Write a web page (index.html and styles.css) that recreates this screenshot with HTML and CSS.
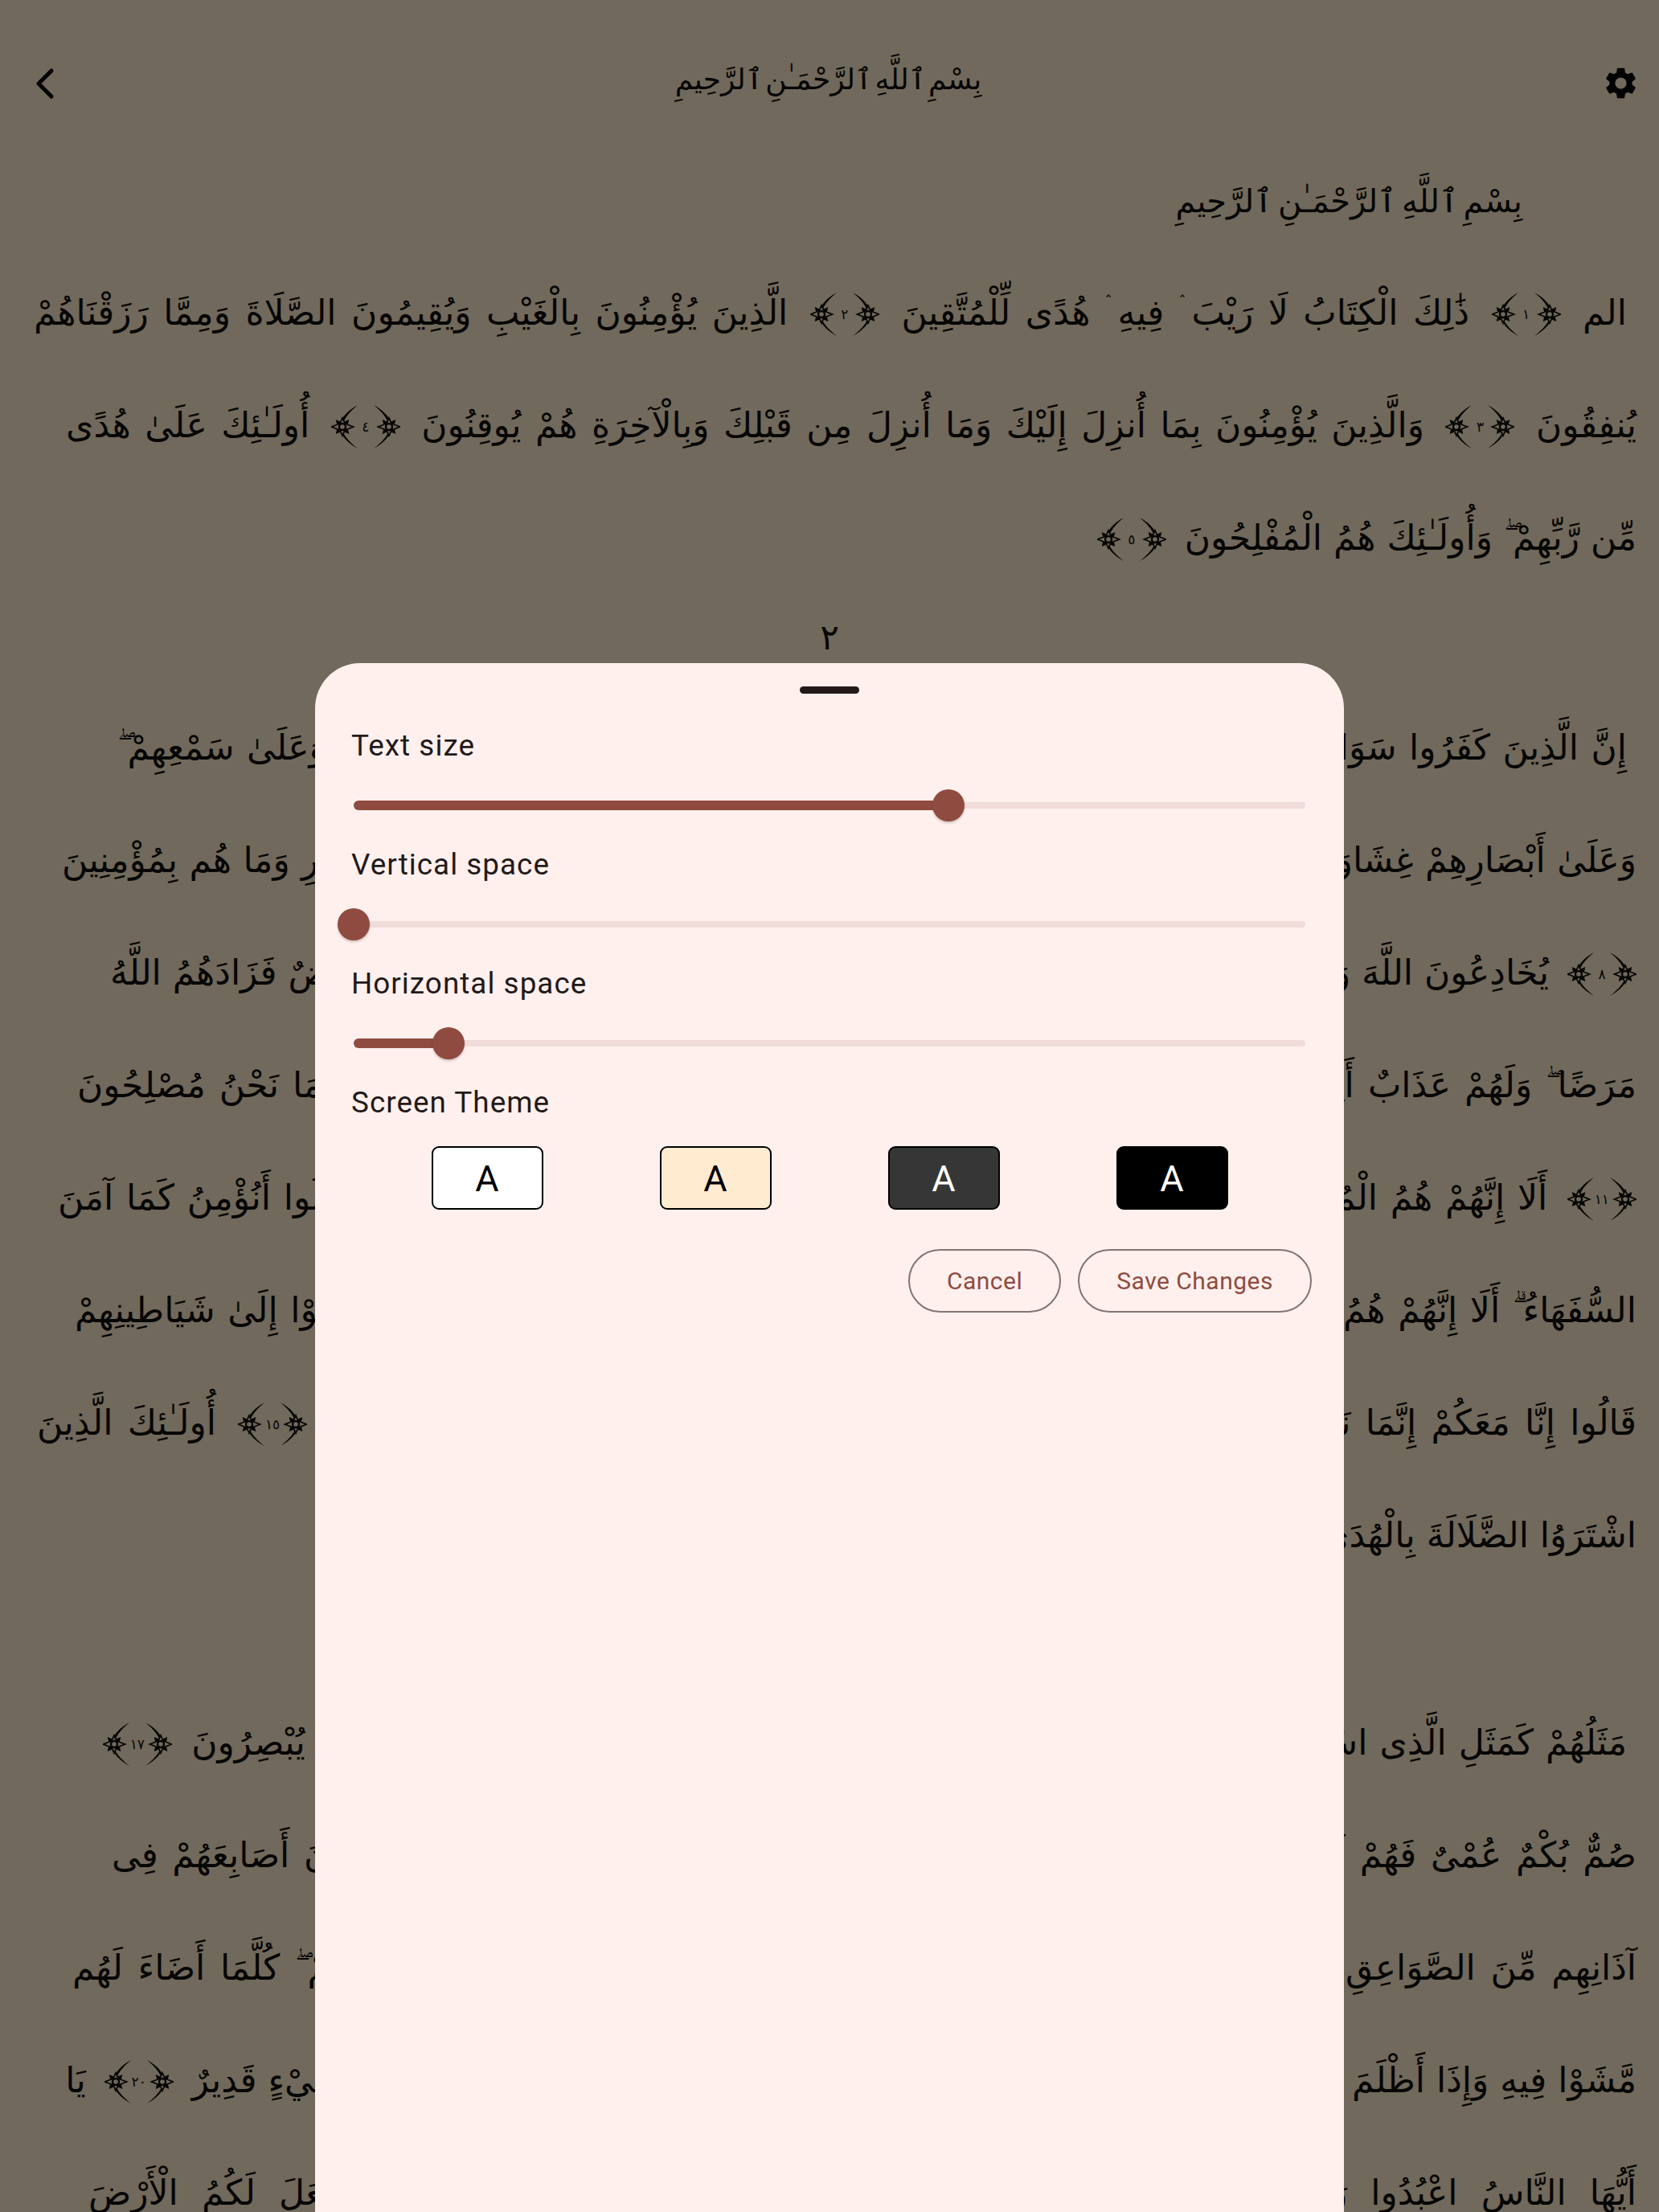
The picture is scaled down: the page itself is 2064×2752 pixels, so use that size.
FILE: index.html
```html
<!DOCTYPE html>
<html lang="ar">
<head>
    <meta charset="UTF-8">
    <meta name="viewport" content="width=device-width, initial-scale=1.0">
    <title>Reader settings</title>
    <link rel="stylesheet" href="styles.css">
</head>
<body>
    <svg class="defs" width="0" height="0">
        <symbol id="ornament" viewBox="0 0 34 54">
            <path d="M33 0C22 9 15 18 14 27s8 18 19 27C20 47 11 37 11 27S20 7 33 0z" fill="currentColor"/>
            <path d="M14 16l2.500 5.500L21 19.500 20 24l7.500 3-7.500 3 1 4.500-4.500-2L14 38l-2.500-5.500-4.500 2 1-4.500-7.500-3L8 24l-1-4.500 4.500 2z" fill="#71695b" stroke="currentColor" stroke-width="1.8"/>
            <path d="M8 21l12 12M20 21L8 33" stroke="currentColor" stroke-width="3"/>
            <circle cx="14" cy="27" r="4" fill="#71695b" stroke="currentColor" stroke-width="2.400"/>
        </symbol>
    </svg>

    <header class="topbar">
        <svg class="back" viewBox="0 0 30 46"><path d="M26 8L10 24l16 16" fill="none" stroke="currentColor" stroke-width="5" stroke-linecap="round" stroke-linejoin="round"/></svg>
        <h1 dir="rtl">بِسْمِ ٱللَّهِ ٱلرَّحْمَـٰنِ ٱلرَّحِيمِ</h1>
        <svg class="gear" viewBox="0 0 24 24"><path fill="currentColor" d="M19.14 12.94c.04-.3.06-.61.06-.94 0-.32-.02-.64-.07-.94l2.03-1.58c.18-.14.23-.41.12-.61l-1.92-3.32c-.12-.22-.37-.29-.59-.22l-2.39.96c-.5-.38-1.03-.7-1.62-.94l-.36-2.54c-.04-.24-.24-.41-.48-.41h-3.84c-.24 0-.43.17-.47.41l-.36 2.54c-.59.24-1.13.57-1.62.94l-2.39-.96c-.22-.08-.47 0-.59.22L2.74 8.87c-.12.21-.08.47.12.61l2.03 1.58c-.05.3-.09.63-.09.94s.02.64.07.94l-2.03 1.58c-.18.14-.23.41-.12.61l1.92 3.32c.12.22.37.29.59.22l2.39-.96c.5.38 1.03.7 1.62.94l.36 2.54c.05.24.24.41.48.41h3.84c.24 0 .44-.17.47-.41l.36-2.54c.59-.24 1.13-.56 1.62-.94l2.39.96c.22.08.47 0 .59-.22l1.92-3.32c.12-.22.07-.47-.12-.61l-2.01-1.58zM12 15.6c-1.98 0-3.6-1.62-3.6-3.6s1.62-3.6 3.6-3.6 3.6 1.62 3.6 3.6-1.62 3.6-3.6 3.6z"/></svg>
    </header>

    <main class="reader" dir="rtl">
        <p class="line line-basmala">بِسْمِ ٱللَّهِ ٱلرَّحْمَـٰنِ ٱلرَّحِيمِ</p>
        <p class="line inset l-42">الم <span class="ayah"><svg class="orn flip"><use href="#ornament"/></svg><span class="num">١</span><svg class="orn"><use href="#ornament"/></svg></span> ذَٰلِكَ الْكِتَابُ لَا رَيْبَ ۛ فِيهِ ۛ هُدًى لِّلْمُتَّقِينَ <span class="ayah"><svg class="orn flip"><use href="#ornament"/></svg><span class="num">٢</span><svg class="orn"><use href="#ornament"/></svg></span> الَّذِينَ يُؤْمِنُونَ بِالْغَيْبِ وَيُقِيمُونَ الصَّلَاةَ وَمِمَّا رَزَقْنَاهُمْ</p>
        <p class="line l-82">يُنفِقُونَ <span class="ayah"><svg class="orn flip"><use href="#ornament"/></svg><span class="num">٣</span><svg class="orn"><use href="#ornament"/></svg></span> وَالَّذِينَ يُؤْمِنُونَ بِمَا أُنزِلَ إِلَيْكَ وَمَا أُنزِلَ مِن قَبْلِكَ وَبِالْآخِرَةِ هُمْ يُوقِنُونَ <span class="ayah"><svg class="orn flip"><use href="#ornament"/></svg><span class="num">٤</span><svg class="orn"><use href="#ornament"/></svg></span> أُولَـٰئِكَ عَلَىٰ هُدًى</p>
        <p class="line l-1369">مِّن رَّبِّهِمْ ۖ وَأُولَـٰئِكَ هُمُ الْمُفْلِحُونَ <span class="ayah ayah-last"><svg class="orn flip"><use href="#ornament"/></svg><span class="num">٥</span><svg class="orn"><use href="#ornament"/></svg></span></p>
        <p class="page-number">٢</p>
        <p class="line inset l-146">إِنَّ الَّذِينَ كَفَرُوا سَوَاءٌ عَلَيْهِمْ أَأَنذَرْتَهُمْ أَمْ لَمْ تُنذِرْهُمْ لَا يُؤْمِنُونَ <span class="ayah"><svg class="orn flip"><use href="#ornament"/></svg><span class="num">٦</span><svg class="orn"><use href="#ornament"/></svg></span> خَتَمَ اللَّهُ عَلَىٰ قُلُوبِهِمْ وَعَلَىٰ سَمْعِهِمْ ۖ</p>
        <p class="line l-77">وَعَلَىٰ أَبْصَارِهِمْ غِشَاوَةٌ ۖ وَلَهُمْ عَذَابٌ عَظِيمٌ <span class="ayah"><svg class="orn flip"><use href="#ornament"/></svg><span class="num">٧</span><svg class="orn"><use href="#ornament"/></svg></span> وَمِنَ النَّاسِ مَن يَقُولُ آمَنَّا بِاللَّهِ وَبِالْيَوْمِ الْآخِرِ وَمَا هُم بِمُؤْمِنِينَ</p>
        <p class="line l-137"><span class="ayah ayah-first"><svg class="orn flip"><use href="#ornament"/></svg><span class="num">٨</span><svg class="orn"><use href="#ornament"/></svg></span> يُخَادِعُونَ اللَّهَ وَالَّذِينَ آمَنُوا وَمَا يَخْدَعُونَ إِلَّا أَنفُسَهُمْ وَمَا يَشْعُرُونَ <span class="ayah"><svg class="orn flip"><use href="#ornament"/></svg><span class="num">٩</span><svg class="orn"><use href="#ornament"/></svg></span> فِى قُلُوبِهِم مَّرَضٌ فَزَادَهُمُ اللَّهُ</p>
        <p class="line l-96">مَرَضًا ۖ وَلَهُمْ عَذَابٌ أَلِيمٌ بِمَا كَانُوا يَكْذِبُونَ <span class="ayah"><svg class="orn flip"><use href="#ornament"/></svg><span class="num">١٠</span><svg class="orn"><use href="#ornament"/></svg></span> وَإِذَا قِيلَ لَهُمْ لَا تُفْسِدُوا فِى الْأَرْضِ قَالُوا إِنَّمَا نَحْنُ مُصْلِحُونَ</p>
        <p class="line l-72"><span class="ayah ayah-first"><svg class="orn flip"><use href="#ornament"/></svg><span class="num">١١</span><svg class="orn"><use href="#ornament"/></svg></span> أَلَا إِنَّهُمْ هُمُ الْمُفْسِدُونَ وَلَـٰكِن لَّا يَشْعُرُونَ <span class="ayah"><svg class="orn flip"><use href="#ornament"/></svg><span class="num">١٢</span><svg class="orn"><use href="#ornament"/></svg></span> وَإِذَا قِيلَ لَهُمْ آمِنُوا كَمَا آمَنَ النَّاسُ قَالُوا أَنُؤْمِنُ كَمَا آمَنَ</p>
        <p class="line l-93">السُّفَهَاءُ ۗ أَلَا إِنَّهُمْ هُمُ السُّفَهَاءُ وَلَـٰكِن لَّا يَعْلَمُونَ <span class="ayah"><svg class="orn flip"><use href="#ornament"/></svg><span class="num">١٣</span><svg class="orn"><use href="#ornament"/></svg></span> وَإِذَا لَقُوا الَّذِينَ آمَنُوا قَالُوا آمَنَّا وَإِذَا خَلَوْا إِلَىٰ شَيَاطِينِهِمْ</p>
        <p class="line l-46">قَالُوا إِنَّا مَعَكُمْ إِنَّمَا نَحْنُ مُسْتَهْزِئُونَ <span class="ayah"><svg class="orn flip"><use href="#ornament"/></svg><span class="num">١٤</span><svg class="orn"><use href="#ornament"/></svg></span> اللَّهُ يَسْتَهْزِئُ بِهِمْ وَيَمُدُّهُمْ فِى طُغْيَانِهِمْ يَعْمَهُونَ <span class="ayah"><svg class="orn flip"><use href="#ornament"/></svg><span class="num">١٥</span><svg class="orn"><use href="#ornament"/></svg></span> أُولَـٰئِكَ الَّذِينَ</p>
        <p class="line line-last">اشْتَرَوُا الضَّلَالَةَ بِالْهُدَىٰ فَمَا رَبِحَت تِّجَارَتُهُمْ وَمَا كَانُوا مُهْتَدِينَ <span class="ayah ayah-last"><svg class="orn flip"><use href="#ornament"/></svg><span class="num">١٦</span><svg class="orn"><use href="#ornament"/></svg></span></p>
        <p class="line inset l-128 section-start">مَثَلُهُمْ كَمَثَلِ الَّذِى اسْتَوْقَدَ نَارًا فَلَمَّا أَضَاءَتْ مَا حَوْلَهُ ذَهَبَ اللَّهُ بِنُورِهِمْ وَتَرَكَهُمْ فِى ظُلُمَاتٍ لَّا يُبْصِرُونَ <span class="ayah ayah-last"><svg class="orn flip"><use href="#ornament"/></svg><span class="num">١٧</span><svg class="orn"><use href="#ornament"/></svg></span></p>
        <p class="line l-139">صُمٌّ بُكْمٌ عُمْىٌ فَهُمْ لَا يَرْجِعُونَ <span class="ayah"><svg class="orn flip"><use href="#ornament"/></svg><span class="num">١٨</span><svg class="orn"><use href="#ornament"/></svg></span> أَوْ كَصَيِّبٍ مِّنَ السَّمَاءِ فِيهِ ظُلُمَاتٌ وَرَعْدٌ وَبَرْقٌ يَجْعَلُونَ أَصَابِعَهُمْ فِى</p>
        <p class="line l-90">آذَانِهِم مِّنَ الصَّوَاعِقِ حَذَرَ الْمَوْتِ ۚ وَاللَّهُ مُحِيطٌ بِالْكَافِرِينَ <span class="ayah"><svg class="orn flip"><use href="#ornament"/></svg><span class="num">١٩</span><svg class="orn"><use href="#ornament"/></svg></span> يَكَادُ الْبَرْقُ يَخْطَفُ أَبْصَارَهُمْ ۖ كُلَّمَا أَضَاءَ لَهُم</p>
        <p class="line l-95">مَّشَوْا فِيهِ وَإِذَا أَظْلَمَ عَلَيْهِمْ قَامُوا ۚ وَلَوْ شَاءَ اللَّهُ لَذَهَبَ بِسَمْعِهِمْ وَأَبْصَارِهِمْ ۚ إِنَّ اللَّهَ عَلَىٰ كُلِّ شَيْءٍ قَدِيرٌ <span class="ayah"><svg class="orn flip"><use href="#ornament"/></svg><span class="num">٢٠</span><svg class="orn"><use href="#ornament"/></svg></span> يَا</p>
        <p class="line l-110">أَيُّهَا النَّاسُ اعْبُدُوا رَبَّكُمُ الَّذِى خَلَقَكُمْ وَالَّذِينَ مِن قَبْلِكُمْ لَعَلَّكُمْ تَتَّقُونَ <span class="ayah"><svg class="orn flip"><use href="#ornament"/></svg><span class="num">٢١</span><svg class="orn"><use href="#ornament"/></svg></span> الَّذِى جَعَلَ لَكُمُ الْأَرْضَ</p>
    </main>

    <section class="sheet">
        <div class="handle"></div>

        <div class="setting-label">Text size</div>
        <div class="slider">
            <div class="slider-fill" style="width: 62.5%"></div>
            <div class="slider-thumb" style="left: 62.5%"></div>
        </div>

        <div class="setting-label">Vertical space</div>
        <div class="slider">
            <div class="slider-fill" style="width: 0%"></div>
            <div class="slider-thumb" style="left: 0%"></div>
        </div>

        <div class="setting-label">Horizontal space</div>
        <div class="slider">
            <div class="slider-fill" style="width: 10%"></div>
            <div class="slider-thumb" style="left: 10%"></div>
        </div>

        <div class="setting-label">Screen Theme</div>
        <div class="themes">
            <div class="theme theme-white">A</div>
            <div class="theme theme-cream">A</div>
            <div class="theme theme-grey">A</div>
            <div class="theme theme-black">A</div>
        </div>

        <div class="actions">
            <button class="action">Cancel</button>
            <button class="action">Save Changes</button>
        </div>
    </section>
</body>
</html>
```

FILE: styles.css
```css
* {
    box-sizing: border-box;
}
html, body {
    margin: 0;
    height: 2752px;
    overflow: hidden;
}
body {
    position: relative;
    width: 2064px;
    background: #71695b;
    color: #060605;
    font-family: "DejaVu Sans", sans-serif;
}
p, h1 {
    margin: 0;
    font-weight: normal;
}
.defs {
    position: absolute;
}

/* top bar */
.topbar {
    display: flex;
    align-items: center;
    justify-content: space-between;
    height: 206px;
    padding: 0 24px 0 38px;
}
.back {
    width: 30px;
    height: 46px;
    color: #000;
}
.gear {
    width: 47px;
    height: 47px;
    color: #000;
}
.topbar h1 {
    font-size: 36px;
    line-height: 60px;
    word-spacing: -8px;
    white-space: nowrap;
    margin-bottom: 8px;
}

/* reader text */
.reader {
    font-size: 44px;
}
.line {
    height: 140px;
    line-height: 140px;
    margin: 0 28px 0 0;
    white-space: nowrap;
    text-align: justify;
    text-align-last: justify;
}
.inset {
    margin-right: 40px;
}
.line-basmala {
    margin: -16px 170px 0 0;
    height: 129px;
    line-height: 120px;
    font-size: 40px;
    word-spacing: -6px;
    text-align-last: right;
}
.line-last {
    text-align-last: right;
    margin-left: 100px;
}
.section-start {
    margin-top: 118px;
}
.page-number {
    height: 121px;
    line-height: 107px;
    text-align: center;
    font-size: 44px;
}
.l-42 { margin-left: 42px; }
.l-46 { margin-left: 46px; }
.l-72 { margin-left: 72px; }
.l-77 { margin-left: 77px; }
.l-82 { margin-left: 82px; }
.l-90 { margin-left: 90px; }
.l-93 { margin-left: 93px; }
.l-95 { margin-left: 95px; }
.l-96 { margin-left: 96px; }
.l-110 { margin-left: 110px; }
.l-128 { margin-left: 128px; }
.l-137 { margin-left: 137px; }
.l-139 { margin-left: 139px; }
.l-146 { margin-left: 146px; }
.l-1369 { margin-left: 1369px; }

.ayah {
    display: inline-flex;
    align-items: center;
    justify-content: center;
    height: 54px;
    vertical-align: -14px;
    line-height: 54px;
    margin: 0 9px;
}
.ayah-first {
    margin-right: 0;
}
.ayah-last {
    margin-left: 0;
}
.num {
    width: 18px;
    font-size: 17px;
    text-align: center;
    text-align-last: center;
}
.orn {
    width: 34px;
    height: 54px;
}
.flip {
    transform: scaleX(-1);
}

/* settings sheet */
.sheet {
    position: absolute;
    left: 392px;
    top: 825px;
    width: 1280px;
    height: 1927px;
    background: #fff0ee;
    border-radius: 56px 56px 0 0;
    padding-top: 29px;
    font-family: Roboto, sans-serif;
    color: #231918;
}
.handle {
    width: 74px;
    height: 9px;
    margin: 0 auto 28px;
    border-radius: 5px;
    background: #231918;
}
.setting-label {
    height: 74px;
    line-height: 74px;
    padding-left: 45px;
    font-size: 36.8px;
    letter-spacing: 1.05px;
}
.slider {
    position: relative;
    height: 8px;
    margin: 33px 48px;
    border-radius: 4px;
    background: #f0dcd9;
}
.slider-fill {
    position: absolute;
    left: 0;
    top: -2px;
    height: 12px;
    border-radius: 6px;
    background: #904b40;
}
.slider-thumb {
    position: absolute;
    top: -16px;
    width: 40px;
    height: 40px;
    margin-left: -20px;
    border-radius: 50%;
    background: #904b40;
    box-shadow: 0 2px 3px rgba(0, 0, 0, 0.2);
}
.themes {
    display: flex;
    justify-content: center;
    margin-top: 17px;
}
.theme {
    width: 139px;
    height: 79px;
    margin: 0 72.5px;
    border: 2px solid #000;
    border-radius: 9px;
    text-align: center;
    font-size: 45px;
    line-height: 78px;
}
.theme-white {
    background: #fff;
    color: #000;
}
.theme-cream {
    background: #ffebd0;
    color: #000;
}
.theme-grey {
    background: #363636;
    color: #fff;
}
.theme-black {
    background: #000;
    color: #fff;
}
.actions {
    display: flex;
    justify-content: flex-end;
    gap: 21px;
    margin-top: 49px;
    padding-right: 40px;
}
.action {
    height: 79px;
    padding: 0 46px;
    border: 2px solid #857370;
    border-radius: 40px;
    background: none;
    color: #904b40;
    font-family: Roboto, sans-serif;
    font-size: 30px;
    letter-spacing: 0.5px;
}
```
